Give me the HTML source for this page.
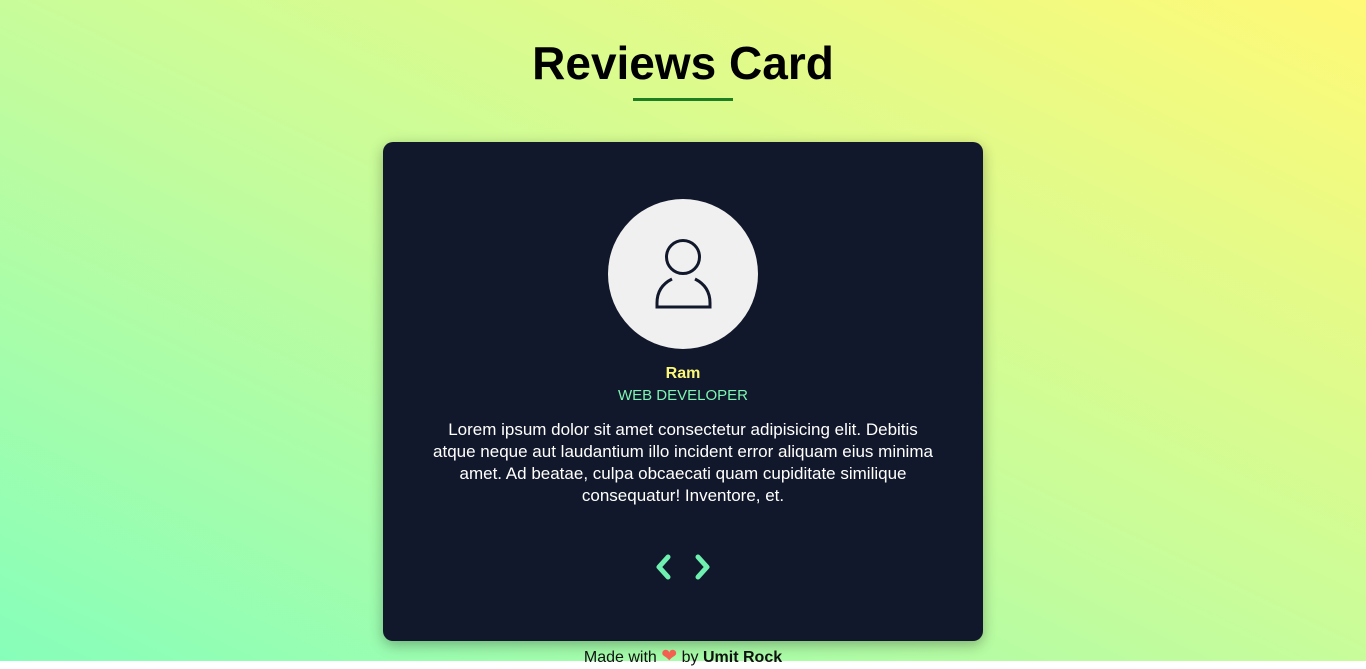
<!DOCTYPE html>
<html><head><style>
html,body{margin:0;padding:0;background:#fff;}
body{width:1366px;height:669px;position:relative;overflow:hidden;font-family:"Liberation Sans",sans-serif;}
.bg{position:absolute;left:0;top:0;width:1366px;height:661px;background:linear-gradient(to top right,#86feba,#c8fc9a 50%,#fff977);}
h1{position:absolute;top:35px;left:0;width:1366px;margin:0;text-align:center;font-size:46px;font-weight:bold;color:#000;line-height:56px;}
.ul{position:absolute;left:633px;top:98px;width:100px;height:3px;background:#1d7f22;}
.card{position:absolute;left:383px;top:142px;width:600px;height:499px;background:#12182b;border-radius:10px;box-shadow:0 4px 14px rgba(0,0,0,.3);}
.av{position:absolute;left:225px;top:57px;width:150px;height:150px;border-radius:50%;background:#f0f0f0;}
.name{position:absolute;top:223px;width:600px;text-align:center;color:#fbf878;font-weight:bold;font-size:16px;}
.job{position:absolute;top:245px;width:600px;text-align:center;color:#7cf5b3;font-size:15px;}
.txt{position:absolute;top:277px;left:42px;width:516px;text-align:center;color:#fff;font-size:17px;line-height:22px;}
.arr{position:absolute;top:410px;left:268px;}
.foot{position:absolute;top:648px;width:1366px;text-align:center;font-size:16px;line-height:18px;color:#111;}
</style></head><body>
<div class="bg"></div>
<h1>Reviews Card</h1>
<div class="ul"></div>
<div class="card">
 <div class="av"><svg width="150" height="150" viewBox="0 0 150 150"><g fill="none" stroke="#12182b" stroke-width="3"><circle cx="75" cy="58" r="16.5"/><path d="M64 80 C54 85 49 93 49 104 L49 108 L102 108 L102 104 C102 93 97 85 87 80"/></g></svg></div>
 <div class="name">Ram</div>
 <div class="job">WEB DEVELOPER</div>
 <div class="txt">Lorem ipsum dolor sit amet consectetur adipisicing elit. Debitis atque neque aut laudantium illo incident error aliquam eius minima amet. Ad beatae, culpa obcaecati quam cupiditate similique consequatur! Inventore, et.</div>
 <svg class="arr" width="70" height="30" viewBox="0 0 70 30"><g fill="none" stroke="#6ff0b0" stroke-width="5" stroke-linecap="round" stroke-linejoin="round"><path d="M17 5 L8 15 L17 25"/><path d="M47 5 L56 15 L47 25"/></g></svg>
</div>
<div class="foot">Made with <span style="color:#f4604f;font-size:19px;line-height:18px">❤</span> by <b>Umit Rock</b></div>
</body></html>
